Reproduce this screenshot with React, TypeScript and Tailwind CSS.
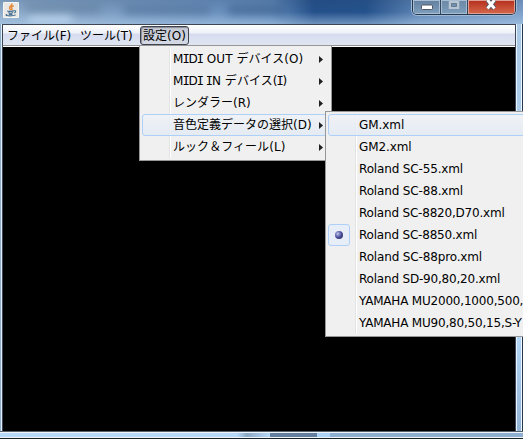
import React from "react";

const menuItems = [
  { label: "MIDI OUT デバイス(O)", cls: "tracking-[0.05px]" },
  { label: "MIDI IN デバイス(I)", cls: "tracking-[0.05px]" },
  { label: "レンダラー(R)", cls: "tracking-[0px]" },
  { label: "音色定義データの選択(D)", cls: "tracking-[0px]", active: true },
  { label: "ルック＆フィール(L)", cls: "tracking-[0.05px]" },
];

const files = [
  { label: "GM.xml", cls: "tracking-[-0.05px]", active: true },
  { label: "GM2.xml", cls: "tracking-[-0.1px]" },
  { label: "Roland SC-55.xml", cls: "tracking-[-0.15px]" },
  { label: "Roland SC-88.xml", cls: "tracking-[-0.15px]" },
  { label: "Roland SC-8820,D70.xml", cls: "tracking-[-0.2px]" },
  { label: "Roland SC-8850.xml", cls: "tracking-[-0.2px]", checked: true },
  { label: "Roland SC-88pro.xml", cls: "tracking-[-0.15px]" },
  { label: "Roland SD-90,80,20.xml", cls: "tracking-[-0.2px]" },
  { label: "YAMAHA MU2000,1000,500,", cls: "tracking-[-0.2px]" },
  { label: "YAMAHA MU90,80,50,15,S-Y", cls: "tracking-[-0.2px]" },
];

// Capital I is set with serifs, the rest of the label without.
function Label({ text }: { text: string }) {
  return (
    <>
      {text.split(/(I)/).map((part, i) =>
        part === "I" ? (
          <span key={i} className="font-['DejaVu_Sans_Mono',monospace] -ml-px tracking-[-1.1px]">I</span>
        ) : (
          part
        ),
      )}
    </>
  );
}

function JavaIcon() {
  return (
    <svg width="16" height="16" viewBox="0 0 16 16" className="block">
      <rect width="16" height="16" rx="1" fill="#e9e8e4" />
      <rect x=".5" y=".5" width="15" height="15" rx="1" fill="none" stroke="#f6f5f1" />
      <path d="M8.8 1.5C9.6 3.8 5.8 4.3 6.6 6.3L7.8 8.2M10.7 3.8C8.5 4.5 8 5.2 8.8 6.2S8.8 7.5 8.5 8" fill="none" stroke="#e58a38" strokeWidth="1.5" />
      <path d="M4.5 8.7C4.2 9.6 10 9.5 11 8.8M5.3 10.5C6.5 11.2 9 11.1 10 10.5M5.8 12C7 12.6 8.5 12.5 9.4 12M11 8.8C13.5 8.2 13 10.5 11 11M4.2 12.2C1 13.3 5 14 8.5 13.8S12.5 13 12.6 12.7" fill="none" stroke="#456f92" strokeWidth="1.1" />
    </svg>
  );
}

function WindowButtons() {
  return (
    <div className="relative flex h-[15px] w-[104px] overflow-hidden rounded-b-[5px] border border-t-0 border-[#24384f] shadow-[0_0_0_1px_#9fb8d4]">
      <div className="flex w-[28px] justify-center border-r border-[#32465e] bg-gradient-to-b from-[#637f9f] to-[#7e9fbd] shadow-[inset_0_0_0_1px_#a6bdd3]">
        <svg width="12" height="14" viewBox="0 0 12 14">
          <rect x=".5" y="5" width="11" height="4.5" rx="1" fill="#fff" stroke="#535666" />
        </svg>
      </div>
      <div className="flex w-[27px] justify-center border-r border-[#32465e] bg-gradient-to-b from-[#6b87a5] to-[#7e9fbd] shadow-[inset_0_0_0_1px_#a6bdd3]">
        <svg width="12" height="14" viewBox="0 0 12 14">
          <path d="M2 2.2h8v5.6H2z" fill="none" stroke="#b9c5d2" strokeWidth="2.5" />
          <path d="M3.5 3.5h5v3h-5z" fill="none" stroke="#657b94" />
        </svg>
      </div>
      <div className="flex flex-1 justify-center bg-gradient-to-b from-[#b52d1b] to-[#d5674a] pr-[1px] shadow-[inset_0_0_0_1px_#dda097]">
        <svg width="14" height="14" viewBox="0 0 14 14">
          <path d="M3.5 0L10.5 8.5M10.5 0L3.5 8.5" stroke="#56505c" strokeWidth="5" />
          <path d="M3.5 0L10.5 8.5M10.5 0L3.5 8.5" stroke="#fff" strokeWidth="3" />
        </svg>
      </div>
    </div>
  );
}

export default function App() {
  return (
    <div className="relative flex h-[439px] w-[523px] flex-col overflow-hidden bg-[#a9c9ea] font-['DejaVu_Sans','Noto_Sans_CJK_JP',sans-serif] text-[12px] leading-[20px] text-black">
      <header className="relative flex h-[24px] shrink-0 justify-between overflow-hidden bg-[linear-gradient(90deg,#8fadcb_0,#7b9cc2_22%,#6f94c0_38%,#5f88b8_52%,#24508a_60%,#25528c_70%,#5d84b4_80%,#7d9fc8_100%)] pl-[3px] pr-[7px]">
        <div className="absolute inset-0 bg-gradient-to-b from-[#203d6430] via-transparent to-[#b6d3ee80]" />
        <div className="absolute left-[28px] top-[14px] h-[9px] w-[45px] rounded-full bg-[#bdd6ef] blur-[5px]" />
        <div className="absolute left-[26px] top-[5px] h-[8px] w-[75px] bg-[#5c7896] opacity-60 blur-[4px]" />
        <div className="absolute left-[124px] top-[6px] h-[8px] w-[86px] bg-[#48688f] opacity-60 blur-[4px]" />
        <div className="absolute left-[228px] top-[6px] h-[8px] w-[56px] bg-[#3c5f8b] opacity-70 blur-[4px]" />
        <div className="relative pt-[2px]"><JavaIcon /></div>
        <WindowButtons />
      </header>

      <div className="flex min-h-0 flex-1">
        <div className="w-[2px] border-r border-[#e4eef8] bg-[#8eaeca]" />
        <main className="flex w-[514px] flex-col border-x border-t border-[#3d4656] bg-black">
          <nav className="flex h-[21px] shrink-0 items-center border-b border-[#929292] bg-[linear-gradient(180deg,#fff_0,#eef1f8_40%,#d6dcee_45%,#e0e5f3_100%)] pl-[4px]">
            <span className="w-[73px] whitespace-nowrap pt-[1px]">ファイル(F)</span>
            <span className="w-[60px] whitespace-nowrap pt-[1px]">ツール(T)</span>
            <span className="h-[19px] w-[49px] whitespace-nowrap rounded-[3px] border border-[#3e434d] bg-gradient-to-b from-[#c5c9d3] to-[#d5d9e5] pl-[2px] leading-[18px] shadow-[inset_1px_1px_1px_#858995]">設定(O)</span>
          </nav>
          <div className="h-px bg-white" />
        </main>
        <div className="flex-1 border-l border-[#eaf4fe] bg-gradient-to-b from-[#a9c8e6] via-[#b5d9fb] via-75% to-[#91b3d6]" />
        <div className="w-px bg-[#eef6ff]" />
        <div className="w-px bg-[#26384a]" />
      </div>

      <footer className="flex h-[8px] shrink-0 flex-col">
        <div className="h-px bg-[#56606b]" />
        <div className="h-px bg-[#eef4fa]" />
        <div className="flex flex-1">
          <div className="w-[237px] bg-[#b7dafa]" />
          <div className="w-[33px] bg-gradient-to-r from-[#b7dafa] via-[#8ba8c2] via-30% to-[#b7dafa]" />
          <div className="w-[47px] bg-[#627f9e]" />
          <div className="w-[13px] bg-[#add3f7]" />
          <div className="flex-1 bg-[#8eafd0]" />
        </div>
        <div className="h-px bg-[#eef5fb]" />
        <div className="h-px bg-[#172027]" />
      </footer>

      <div className="absolute left-[139px] top-[45px] h-[116px] w-[193px] border border-[#979797] bg-[#f0f0f0] p-[2px]">
        <div className="absolute bottom-[2px] left-[29px] top-[2px] w-[2px] border-l border-[#e2e3e3] bg-white" />
        {menuItems.map((m) => (
          <div key={m.label} className={`relative flex h-[22px] items-center justify-between rounded-[3px] border pl-[30px] pr-[5px] ${m.active ? "border-[#aecff7] bg-gradient-to-b from-[#eff2f7]/80 to-[#e2eaf4]/80" : "border-transparent"}`}>
            <span className={`whitespace-nowrap ${m.cls}`}><Label text={m.label} /></span>
            <svg width="4" height="7" viewBox="0 0 4 7" className="shrink-0"><path d="M0 0l4 3.5L0 7z" fill="#202020" /></svg>
          </div>
        ))}
      </div>

      <div className="absolute left-[325px] top-[111px] h-[226px] w-[230px] border border-[#979797] bg-[#f0f0f0] p-[2px]">
        <div className="absolute bottom-[2px] left-[29px] top-[2px] w-[2px] border-l border-[#e2e3e3] bg-white" />
        {files.map((f) => (
          <div key={f.label} className={`relative flex h-[22px] items-center rounded-[3px] border ${f.active ? "border-[#aecff7] bg-gradient-to-b from-[#eff2f7]/80 to-[#e2eaf4]/80" : "border-transparent"}`}>
            <div className={`-ml-px mr-[9px] flex h-[22px] w-[22px] shrink-0 items-center justify-center rounded-[3px] ${f.checked ? "border border-[#aecff7] bg-[#e8eef7]" : ""}`}>
              {f.checked && <span className="h-[8px] w-[8px] rounded-full bg-[radial-gradient(circle_at_35%_35%,#c4c7ec,#5054a0_45%,#1b1c4c)]" />}
            </div>
            <span className={`whitespace-nowrap ${f.cls}`}>{f.label}</span>
          </div>
        ))}
      </div>
    </div>
  );
}
